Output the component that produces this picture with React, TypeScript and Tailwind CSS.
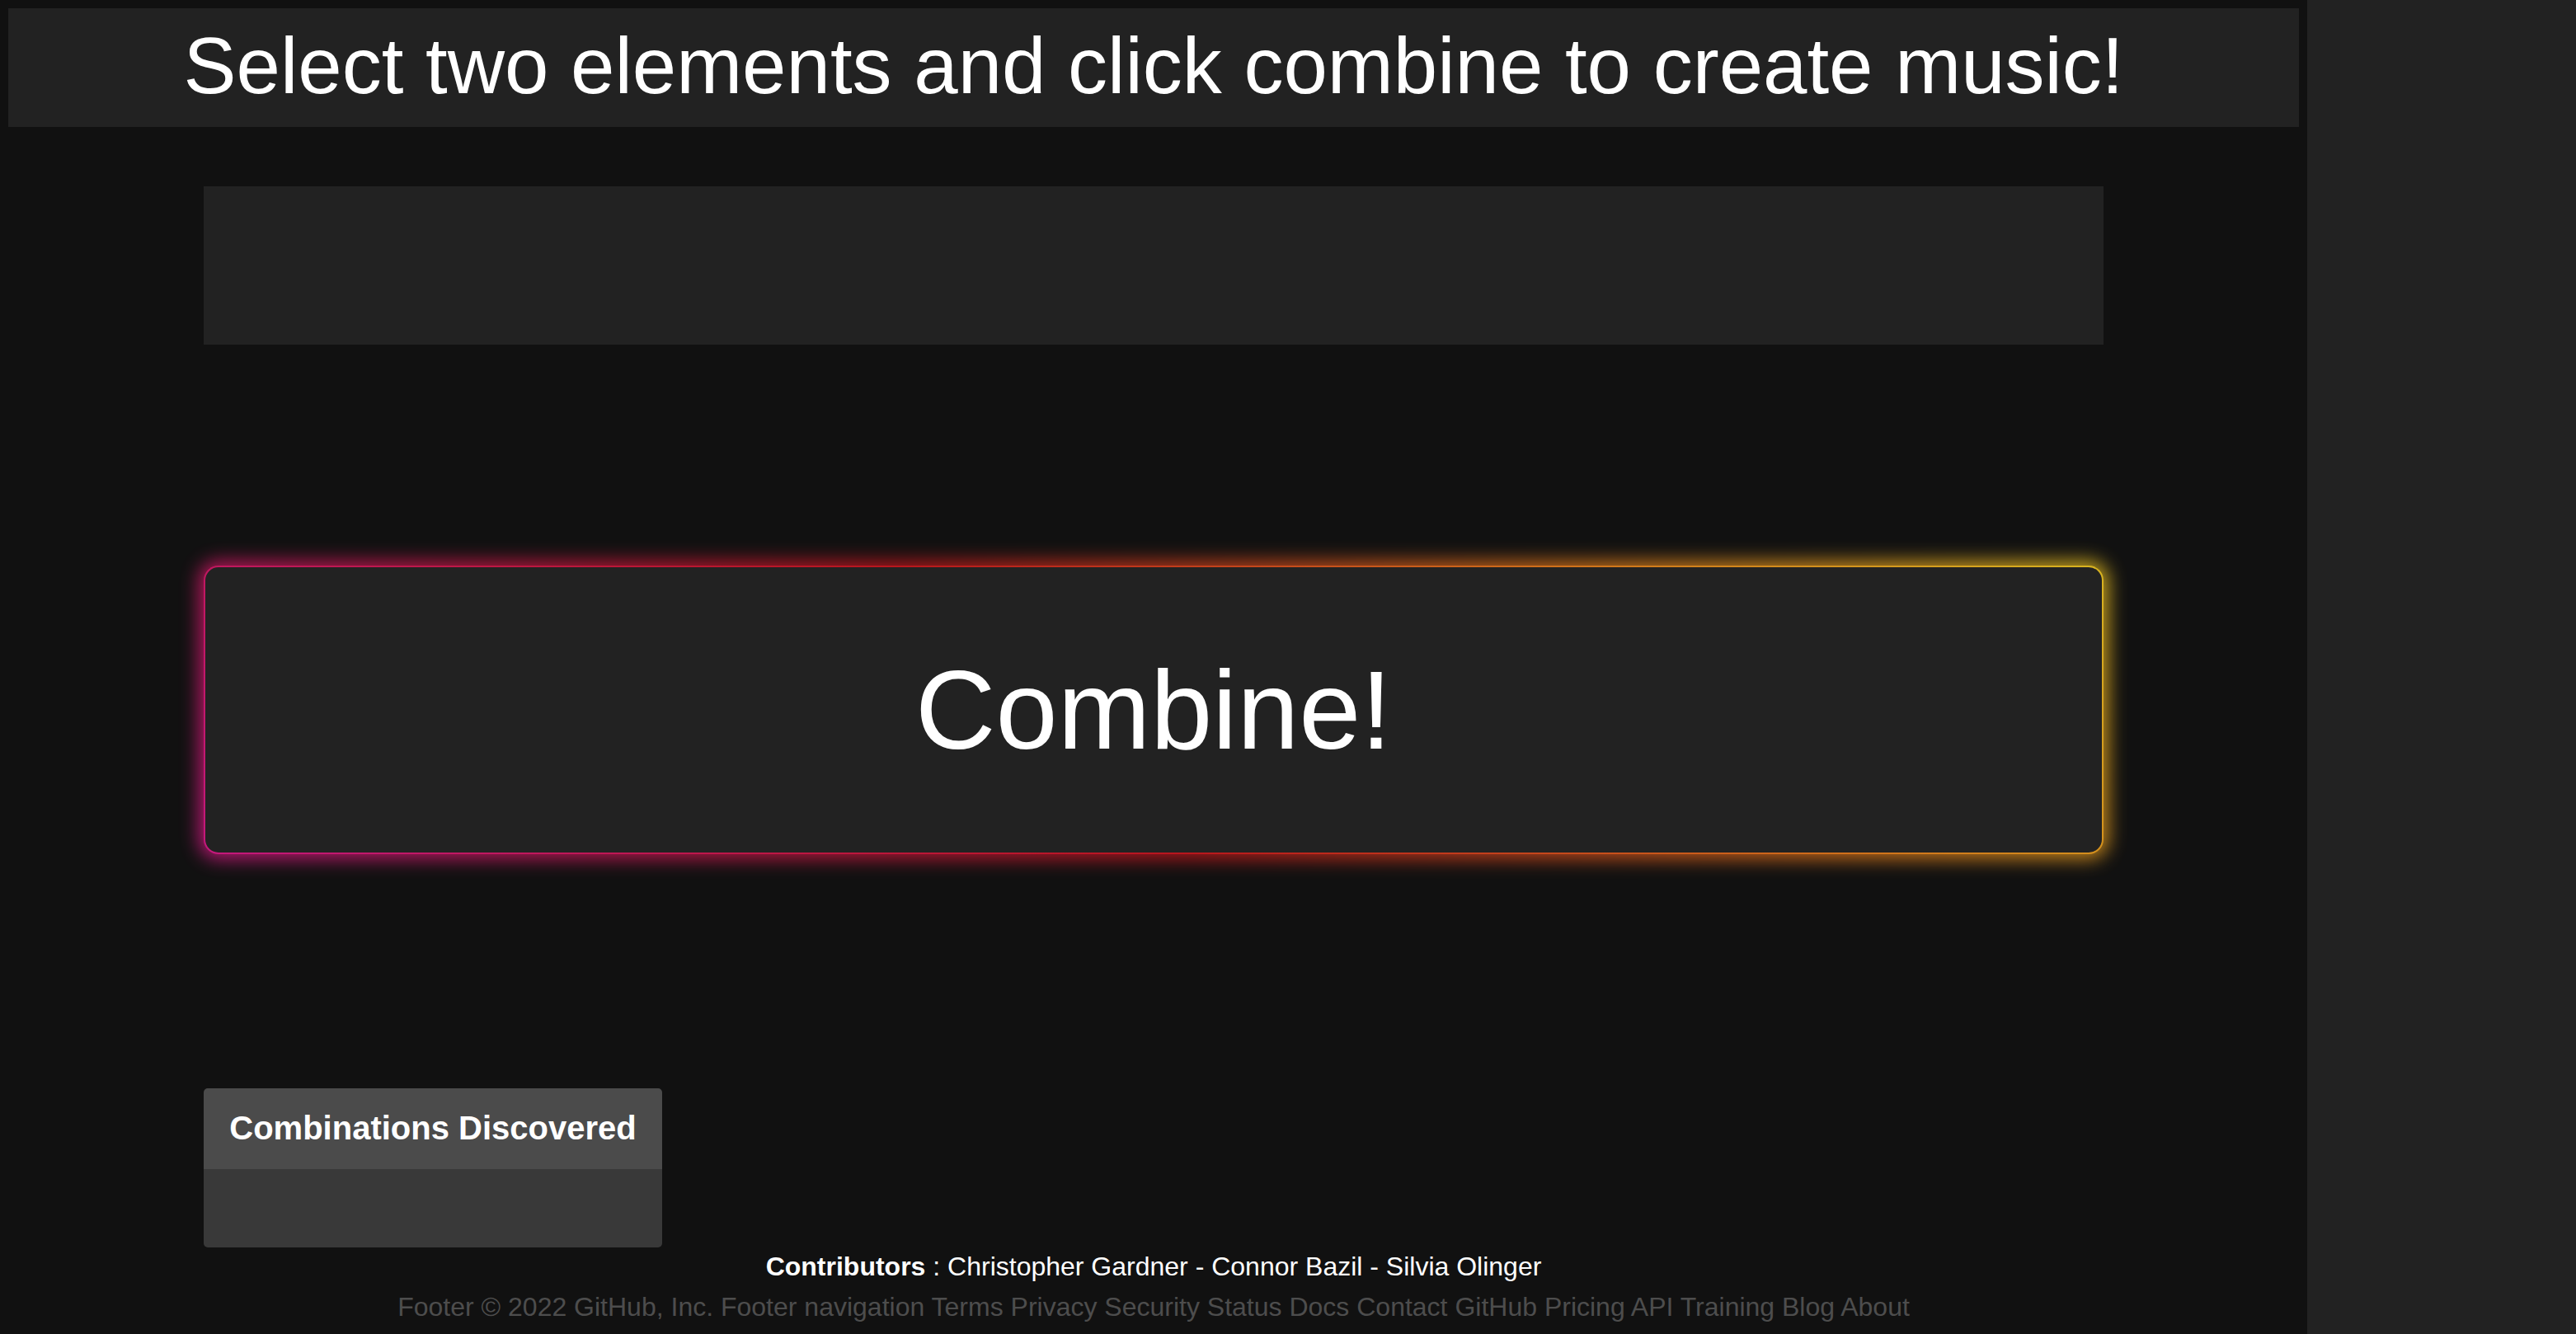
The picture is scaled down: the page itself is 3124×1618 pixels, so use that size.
const contributors = ['Christopher Gardner', 'Connor Bazil', 'Silvia Olinger'];

const footerLinks = [
  'Terms',
  'Privacy',
  'Security',
  'Status',
  'Docs',
  'Contact GitHub',
  'Pricing',
  'API',
  'Training',
  'Blog',
  'About',
];

function CombineButton() {
  return (
    <div className="relative mt-[268px] h-[350px]">
      {/* glow behind the border */}
      <div className="absolute -inset-[6px] rounded-[24px] bg-[linear-gradient(45deg,#c4187c,#b8161c_45%,#d0701a_75%,#d8b420)] opacity-90 blur-[11px]" />
      <div className="relative h-full rounded-[18px] bg-[linear-gradient(45deg,#c4187c,#b8161c_45%,#d0701a_75%,#d8b420)] p-[2px]">
        <button className="flex h-full w-full items-center justify-center rounded-[16px] bg-[#222222] text-[135px] leading-none text-white">
          Combine!
        </button>
      </div>
    </div>
  );
}

export default function App() {
  return (
    <div className="flex min-h-screen font-['Liberation_Sans',Arial,sans-serif]">
      <main className="flex w-[2798px] flex-col bg-[#111111]">
        <header className="mx-[10px] mt-[10px] flex h-[144px] items-center justify-center bg-[#222222]">
          <h1 className="pb-[4px] text-[96px] font-normal leading-none text-white">
            Select two elements and click combine to create music!
          </h1>
        </header>

        <div className="px-[247px]">
          <div className="mt-[72px] h-[192px] bg-[#222222]" />

          <CombineButton />

          <div className="mt-[284px] w-[556px] overflow-hidden rounded-[5px]">
            <div className="flex h-[98px] items-center justify-center bg-[#4b4b4b] pb-[2px]">
              <h2 className="text-[40px] font-bold text-white">Combinations Discovered</h2>
            </div>
            <div className="h-[95px] bg-[#393939]" />
          </div>
        </div>

        <footer className="mt-[5px] flex flex-col items-center text-[32px] leading-[37px]">
          <p className="text-white">
            <span className="font-bold">Contributors</span> : {contributors.join(' - ')}
          </p>
          <p className="mt-[12px] text-[#4d4d4d]">
            Footer © 2022 GitHub, Inc. Footer navigation {footerLinks.join(' ')}
          </p>
        </footer>
      </main>
      <aside className="flex-1 bg-[#222222]" />
    </div>
  );
}
